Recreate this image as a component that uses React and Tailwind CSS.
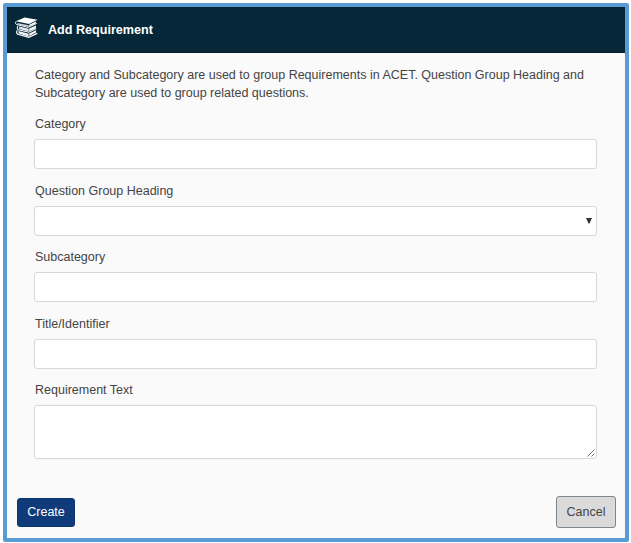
function BooksIcon() {
  return (
    <svg width="24" height="22" viewBox="0 0 24 22" fill="none" className="shrink-0">
      <path d="M1 4.2 9.5.6 22.6 2.8 14 7Z" fill="#fff" />
      <path d="M1.2 4.4c-1 1-.7 2.6.2 3.1L13 10.4l8.8-4" stroke="#fff" strokeWidth="1" />
      <path d="M2.2 6 13.6 8.3V10L3 7.6Z" fill="#c9d2d8" />
      <path d="M14.2 7.8 20.8 4.6 21 6.2 14.2 9.6Z" fill="#fff" />
      <path d="M3 9.2c-1.1 1-.8 2.8.2 3.5l10.6 2.5 7.4-3.6" stroke="#fff" strokeWidth="1.1" />
      <path d="M4 9.4 13.6 11.8V14.4L4.2 12Z" fill="#e8edf0" />
      <path d="M14.2 11.6 21 8.4 20.8 11 14.2 14.2Z" fill="#fff" />
      <path d="M2.4 13.4c-1.3 1.2-.8 3.2.4 3.9l11 3.1 8.4-4" stroke="#fff" strokeWidth="1.2" />
      <path d="M3.4 14 13.6 16.8V19.4L3.6 16.4Z" fill="#f3f5f7" />
      <path d="M14.2 16.6 21.2 13.2 21 15.6 14.2 19Z" fill="#fff" />
    </svg>
  );
}

function Field({ label, className, children }) {
  return (
    <label className={`flex flex-col ${className}`}>
      <span className="mb-[6px] h-[18px] pl-px leading-[18px]">{label}</span>
      {children}
    </label>
  );
}

const control = "block w-full rounded-[3px] border border-[#d3d9de] bg-white outline-none";

export default function App() {
  return (
    <div className="h-[543px] w-[631px] bg-white pt-[3px] pl-[3px] font-['Liberation_Sans',Arial,sans-serif] text-[12.5px] text-[#444]">
      <div className="flex h-[539px] w-[626px] flex-col rounded-[2px] border-4 border-[#5b9bd5] bg-[#fafafa]">
        <header className="flex h-[46px] shrink-0 items-center border-b border-[#0b1c29] bg-[#052737] pb-[3px] pl-[8px] text-white">
          <BooksIcon />
          <h1 className="ml-[9px] pt-[4px] text-[12.6px] leading-[18px] font-bold">Add Requirement</h1>
        </header>
        <main className="flex h-[406px] flex-col pt-[13px] pr-[28px] pl-[27px]">
          <p className="pl-px leading-[18px] whitespace-nowrap">
            Category and Subcategory are used to group Requirements in ACET. Question Group Heading and
            <br />
            Subcategory are used to group related questions.
          </p>
          <Field label="Category" className="mt-[13px]">
            <input className={`${control} h-[30px]`} />
          </Field>
          <Field label="Question Group Heading" className="mt-[13px]">
            <span className={`${control} flex h-[30px] items-center justify-end pr-[4px]`}>
              <svg width="6" height="6" viewBox="0 0 6 6" className="fill-[#333]">
                <path d="M0 0h6L3.5 5.5h-1Z" />
              </svg>
            </span>
          </Field>
          <Field label="Subcategory" className="mt-[12px]">
            <input className={`${control} h-[30px]`} />
          </Field>
          <Field label="Title/Identifier" className="mt-[13px]">
            <input className={`${control} h-[30px]`} />
          </Field>
          <Field label="Requirement Text" className="mt-[12px]">
            <span className={`${control} flex h-[54px] items-end justify-end p-[1px]`}>
              <svg width="8" height="8" viewBox="0 0 8 8" className="stroke-[#777]">
                <path d="M.5 7.5l7-7M4.5 7.5l3-3" />
              </svg>
            </span>
          </Field>
        </main>
        <footer className="flex items-center justify-between pt-[37px] pr-[9px] pl-[10px]">
          <button className="h-[29px] w-[58px] rounded-[3px] border border-[#0a3573] bg-[#0f3b7a] text-white">Create</button>
          <button className="h-[32px] w-[60px] rounded-[3px] border border-[#7b858e] bg-[#dadada]">Cancel</button>
        </footer>
      </div>
    </div>
  );
}
